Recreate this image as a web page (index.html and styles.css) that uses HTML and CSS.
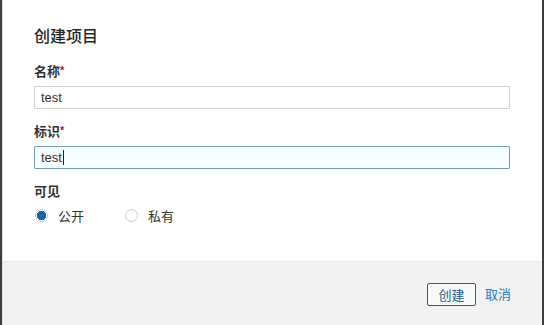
FILE: index.html
```html
<!DOCTYPE html>
<html lang="zh-CN">
<head>
<meta charset="utf-8">
<title>创建项目</title>
<link rel="stylesheet" href="styles.css">
</head>
<body>
<div class="modal">
  <div class="modal-body">
    <h2 class="title">创建项目</h2>
    <div class="group">
      <label class="label">名称<span class="req">*</span></label>
      <input class="input" type="text" value="test">
    </div>
    <div class="group">
      <label class="label">标识<span class="req">*</span></label>
      <div class="input-wrap">
        <input class="input focused" type="text" value="test">
        <span class="caret"></span>
      </div>
    </div>
    <div class="group group-last">
      <label class="label">可见</label>
      <div class="radios">
        <label class="radio"><span class="dot checked"></span>公开</label>
        <label class="radio"><span class="dot"></span>私有</label>
      </div>
    </div>
  </div>
  <div class="modal-footer">
    <button class="btn" type="button">创建</button>
    <a class="cancel" href="#">取消</a>
  </div>
</div>
</body>
</html>
```

FILE: styles.css
```css
html, body {
  margin: 0;
  padding: 0;
}
body {
  background: #3e3e3e;
  padding: 0 2px;
  font-family: "Liberation Sans", "Noto Sans CJK SC", sans-serif;
  color: #333;
}
.modal {
  background: #fff;
  height: 325px;
  border-left: 1px solid #dcdcdc;
  display: flex;
  flex-direction: column;
  box-sizing: border-box;
}
.modal-body {
  height: 262px;
  flex: none;
  padding: 27px 32px 0 31px;
  box-sizing: border-box;
  border-bottom: 1px solid #e6e6e6;
}
.title {
  margin: 0 0 16px;
  font-size: 16px;
  line-height: 20px;
  font-weight: 500;
  color: #262626;
}
.group {
  display: flex;
  flex-direction: column;
  margin-bottom: 14px;
}
.group-last {
  margin-top: 1px;
}
.label {
  display: block;
  height: 18px;
  font-size: 13px;
  line-height: 18px;
  font-weight: bold;
  color: #333;
  margin-bottom: 5px;
}
.req {
  color: #d0021b;
  font-weight: bold;
  font-size: 11px;
  line-height: 0;
  position: relative;
  top: -2px;
}
.input {
  display: block;
  width: 100%;
  height: 23px;
  box-sizing: border-box;
  border: 1px solid #cfcfcf;
  border-radius: 1px;
  padding: 0 6px;
  font-family: "Liberation Sans", "Noto Sans CJK SC", sans-serif;
  font-size: 13px;
  color: #333;
  background: #fff;
  outline: none;
}
.input.focused {
  border-color: #6f9bbd;
  background: #f6fdff;
  caret-color: transparent;
}
.input-wrap {
  position: relative;
}
.caret {
  position: absolute;
  left: 29px;
  top: 4px;
  width: 1px;
  height: 15px;
  background: #222;
}
.radios {
  display: flex;
  align-items: center;
  height: 18px;
  font-size: 13px;
  font-weight: normal;
}
.radio {
  display: flex;
  align-items: center;
  gap: 10px;
  margin-right: 40px;
  margin-left: 1px;
  color: #333;
}
.dot {
  width: 13px;
  height: 13px;
  box-sizing: border-box;
  border-radius: 50%;
  border: 1px solid #cccccc;
  background: #fff;
}
.dot.checked {
  border-color: #b9cfe0;
  background: radial-gradient(circle, #1c67a3 0 4.5px, #fff 5px);
}
.modal-footer {
  flex: 1;
  background: #f2f2f2;
  display: flex;
  justify-content: flex-end;
  align-items: flex-start;
  padding: 21px 31px 0 0;
  gap: 9px;
}
.btn {
  height: 23px;
  width: 49px;
  box-sizing: border-box;
  border: 1px solid #3d5b77;
  border-radius: 2px;
  background: #f6f8fa;
  color: #1f5d8e;
  font-family: "Liberation Sans", "Noto Sans CJK SC", sans-serif;
  font-size: 13px;
  padding: 0;
}
.cancel {
  font-size: 13px;
  line-height: 23px;
  color: #2a7ab8;
  text-decoration: none;
}
```
